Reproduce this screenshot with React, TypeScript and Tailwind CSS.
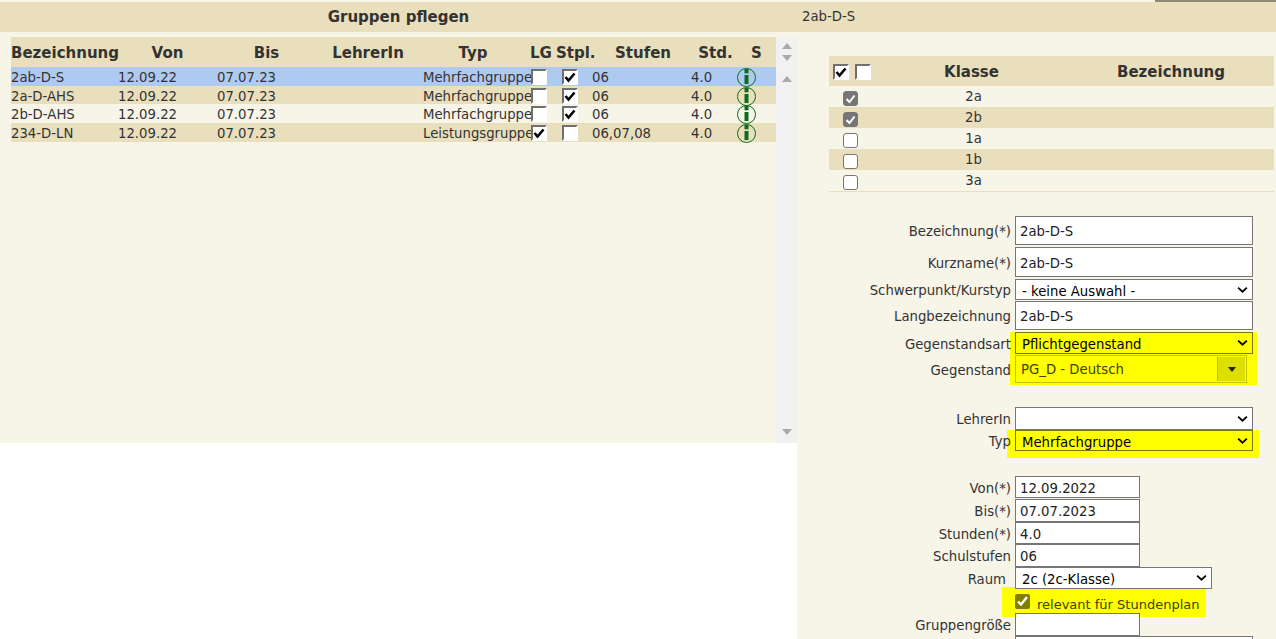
import React from "react";

const font = { fontFamily: '"DejaVu Sans", "Noto Sans", sans-serif' };

function OldBox({ checked }: { checked?: boolean }) {
  return (
    <span className="relative block w-[16px] h-[16px] bg-white border-2 border-t-[#6f6f6f] border-l-[#6f6f6f] border-r-white border-b-white">
      {checked && (
        <svg viewBox="0 0 12 12" className="absolute left-0 top-0 w-[12px] h-[12px]">
          <path d="M1.5 6 L4.5 9.5 L10.5 2.5" fill="none" stroke="#000" strokeWidth="2.6" />
        </svg>
      )}
    </span>
  );
}

function GrayBox({ checked }: { checked?: boolean }) {
  return (
    <span
      className={
        "block w-[15px] h-[15px] rounded-[3px] border border-[#767676] " + (checked ? "bg-[#767676]" : "bg-white")
      }
    >
      {checked && (
        <svg viewBox="0 0 13 13" className="w-[13px] h-[13px] block">
          <path d="M2.5 7 L5.5 10 L10.5 3.5" fill="none" stroke="#fff" strokeWidth="2" />
        </svg>
      )}
    </span>
  );
}

function InfoIcon() {
  return (
    <svg viewBox="0 0 19 19" className="relative w-[19px] h-[19px] block">
      <circle cx="9.5" cy="9.5" r="9" fill="none" stroke="#0f6b1c" strokeWidth="1" />
      <rect x="7.5" y="1" width="4" height="4.3" fill="#0f6b1c" />
      <rect x="7.5" y="7" width="4" height="9" fill="#0f6b1c" />
    </svg>
  );
}

function Chevron() {
  return (
    <svg viewBox="0 0 12 8" className="absolute right-[5px] top-1/2 -translate-y-1/2 w-[11px] h-[7px] pointer-events-none">
      <path d="M1 1.2 L6 6 L11 1.2" fill="none" stroke="#000" strokeWidth="2" />
    </svg>
  );
}

const rows = [
  { n: "2ab-D-S", t: "Mehrfachgruppe", lg: false, st: true, s: "06", bg: "bg-[#afcaf0]", h: "h-[19px]" },
  { n: "2a-D-AHS", t: "Mehrfachgruppe", lg: false, st: true, s: "06", bg: "bg-[#e9dfbc]", h: "h-[18px]" },
  { n: "2b-D-AHS", t: "Mehrfachgruppe", lg: false, st: true, s: "06", bg: "", h: "h-[19px]" },
  { n: "234-D-LN", t: "Leistungsgruppe", lg: true, st: false, s: "06,07,08", bg: "bg-[#e9dfbc]", h: "h-[19px]" },
];

const gridCols = "grid grid-cols-[107px_99px_99px_107px_108px_21px_40px_99px_46px_39px]";

function Triangle({ down }: { down?: boolean }) {
  return (
    <svg viewBox="0 0 10 6" className="w-[10px] h-[6px] block">
      <path d={down ? "M0 0H10L5 6Z" : "M0 6H10L5 0Z"} fill="#a9a9a9" />
    </svg>
  );
}

function Label({ children, extra }: { children: React.ReactNode; extra?: string }) {
  return <div className={"w-[214px] pt-[3px] text-right whitespace-nowrap shrink-0 " + (extra || "")}>{children}</div>;
}

const inputBase =
  "block h-full bg-white border border-[#767676] pl-[4px] pt-[2px] text-[13.25px] leading-none text-[#222] outline-none";
const selectBase =
  "block w-full h-full appearance-none bg-transparent border border-[#767676] pl-[6px] pt-[2px] text-[13.25px] text-black outline-none";

function Select({ value, w, border, white }: { value: string; w: string; border?: string; white?: boolean }) {
  return (
    <div className={"relative h-full " + w}>
      <select className={selectBase + " " + (border || "") + (white ? " bg-white" : "")} style={font}>
        <option>{value}</option>
      </select>
      <Chevron />
    </div>
  );
}

function TextRow({ label, value, w, h, mt }: { label: string; value: string; w: string; h: string; mt: string }) {
  return (
    <div className={"flex items-center gap-1 " + h + " " + mt}>
      <Label>{label}</Label>
      <input readOnly value={value} className={inputBase + " " + w} style={font} />
    </div>
  );
}

export default function App() {
  return (
    <div className="relative w-[1276px] h-[639px] overflow-hidden bg-white text-[13.25px] text-[#333]" style={font}>
      {/* top strip */}
      <div className="h-[2px] bg-[#f7f4e8] flex justify-end">
        <div className="w-[121px] bg-[#8f8a74]" />
      </div>
      {/* title bar */}
      <div className="h-[30px] bg-[#e9dfbc] flex items-center">
        <div className="w-[797px] text-center font-bold text-[15px]">Gruppen pflegen</div>
        <div className="pl-[5px]">2ab-D-S</div>
      </div>

      <div className="flex items-start">
        {/* left list */}
        <div className="w-[797px] h-[411px] bg-[#f7f4e8] pt-[5px] pl-[11px] flex">
          <div className="w-[765px]">
            <div className={gridCols + " h-[30px] pt-[2px] bg-[#e9dfbc] items-center font-bold text-[15px] whitespace-nowrap"}>
              <div>Bezeichnung</div>
              <div className="text-center">Von</div>
              <div className="text-center">Bis</div>
              <div className="text-center pr-[3px]">LehrerIn</div>
              <div className="text-center pr-[8px]">Typ</div>
              <div className="-ml-[1px]">LG</div>
              <div className="pl-[4px]">Stpl.</div>
              <div className="text-center pl-[3px]">Stufen</div>
              <div className="text-center pl-[3px]">Std.</div>
              <div className="text-center">S</div>
            </div>
            {rows.map((r) => (
              <div key={r.n} className={gridCols + " items-center whitespace-nowrap " + r.bg + " " + r.h}>
                <div className="pt-[1px]">{r.n}</div>
                <div className="pt-[1px]">12.09.22</div>
                <div className="pt-[1px]">07.07.23</div>
                <div />
                <div className="pt-[1px]">{r.t}</div>
                <div><OldBox checked={r.lg} /></div>
                <div className="pl-[10px]"><OldBox checked={r.st} /></div>
                <div className="pt-[1px]">{r.s}</div>
                <div className="pt-[1px]">4.0</div>
                <div><InfoIcon /></div>
              </div>
            ))}
          </div>
          <div className="w-[21px] bg-[#f1f1f1] flex flex-col items-center pt-[6px] pb-[8px]">
            <Triangle />
            <div className="mt-[6px]"><Triangle down /></div>
            <div className="mt-[15px]"><Triangle /></div>
            <div className="mt-auto"><Triangle down /></div>
          </div>
        </div>

        {/* right form */}
        <div className="relative w-[479px] h-[607px] bg-[#f7f4e8]">
          {/* marker highlights, underneath the controls */}
          <div className="absolute left-[213px] top-[300px] w-[247px] h-[53px] bg-[#ffff00]" />
          <div className="absolute left-[210px] top-[398px] w-[252px] h-[28px] bg-[#ffff00]" />
          <div className="absolute left-[205px] top-[555px] w-[204px] h-[30px] bg-[#ffff00]" />

          <div className="relative pt-[24px]">
            <div className="ml-[32px] w-[445px]">
              <div className="h-[30px] pt-[2px] bg-[#e9dfbc] flex items-center font-bold text-[15px]">
                <div className="w-[46px] flex gap-[6px] pl-[4px]">
                  <OldBox checked />
                  <OldBox />
                </div>
                <div className="w-[193px] text-center">Klasse</div>
                <div className="flex-1 text-center">Bezeichnung</div>
              </div>
              {[
                ["2a", true, ""],
                ["2b", true, "bg-[#e9dfbc]"],
                ["1a", false, ""],
                ["1b", false, "bg-[#e9dfbc]"],
                ["3a", false, ""],
              ].map(([k, c, bg]) => (
                <div key={k as string} className={"h-[21px] flex items-center " + bg}>
                  <div className="w-[46px] pl-[14px] pt-[3px] flex items-center">
                    <GrayBox checked={c as boolean} />
                  </div>
                  <div className="w-[197px] text-center pt-[1px]">{k as string}</div>
                </div>
              ))}
              <div className="h-px bg-[#e9dfbc]" />
            </div>

            <TextRow label="Bezeichnung(*)" value="2ab-D-S" w="w-[238px]" h="h-[29px]" mt="mt-[24px]" />
            <TextRow label="Kurzname(*)" value="2ab-D-S" w="w-[238px]" h="h-[30px]" mt="mt-[2px]" />
            <div className="flex items-center gap-1 h-[21px] mt-[2px]">
              <Label>Schwerpunkt/Kurstyp</Label>
              <Select value="- keine Auswahl -" w="w-[238px]" white />
            </div>
            <TextRow label="Langbezeichnung" value="2ab-D-S" w="w-[238px]" h="h-[29px]" mt="mt-[1px]" />
            <div className="flex items-center gap-1 h-[22px] mt-[2px]">
              <Label>Gegenstandsart</Label>
              <Select value="Pflichtgegenstand" w="w-[238px]" border="border-[#777700]" />
            </div>
            <div className="flex items-center gap-1 h-[28px] mt-[1px]">
              <Label>Gegenstand</Label>
              <div className="w-[232px] h-full border border-[#c4c400] flex items-center justify-between pl-[5px] pr-[1px]">
                <span className="text-[#404000] pt-[1px]">PG_D - Deutsch</span>
                <span className="w-[28px] h-[24px] bg-[#dede00] border-l border-[#bcbc00] flex items-center justify-center">
                  <svg viewBox="0 0 8 5" className="w-[8px] h-[5px] block"><path d="M0 0H8L4 5Z" fill="#222" /></svg>
                </span>
              </div>
            </div>
            <div className="flex items-center gap-1 h-[23px] mt-[24px]">
              <Label>LehrerIn</Label>
              <Select value="" w="w-[238px]" white />
            </div>
            <div className="flex items-center gap-1 h-[21px]">
              <Label>Typ</Label>
              <Select value="Mehrfachgruppe" w="w-[238px]" border="border-[#777700]" />
            </div>
            <TextRow label="Von(*)" value="12.09.2022" w="w-[125px]" h="h-[22px]" mt="mt-[25px]" />
            <TextRow label="Bis(*)" value="07.07.2023" w="w-[125px]" h="h-[23px]" mt="mt-[1px]" />
            <TextRow label="Stunden(*)" value="4.0" w="w-[125px]" h="h-[22px]" mt="mt-0" />
            <TextRow label="Schulstufen" value="06" w="w-[125px]" h="h-[23px]" mt="mt-0" />
            <div className="flex items-center gap-1 h-[22px]">
              <Label extra="pr-[5px]">Raum</Label>
              <Select value="2c (2c-Klasse)" w="w-[197px]" white />
            </div>
            <div className="flex items-start h-[24px] pl-[218px]">
              <input type="checkbox" checked readOnly className="block m-0 mt-[5px] w-[15px] h-[15px] accent-[#807f00]" />
              <span className="ml-[7px] mt-[6px] text-[13px] text-[#404000]">relevant für Stundenplan</span>
            </div>
            <TextRow label="Gruppengröße" value="" w="w-[125px]" h="h-[23px]" mt="mt-0" />
            <div className="ml-[218px] w-[238px] h-[20px] bg-white border border-[#767676]" />
          </div>
        </div>
      </div>
    </div>
  );
}
